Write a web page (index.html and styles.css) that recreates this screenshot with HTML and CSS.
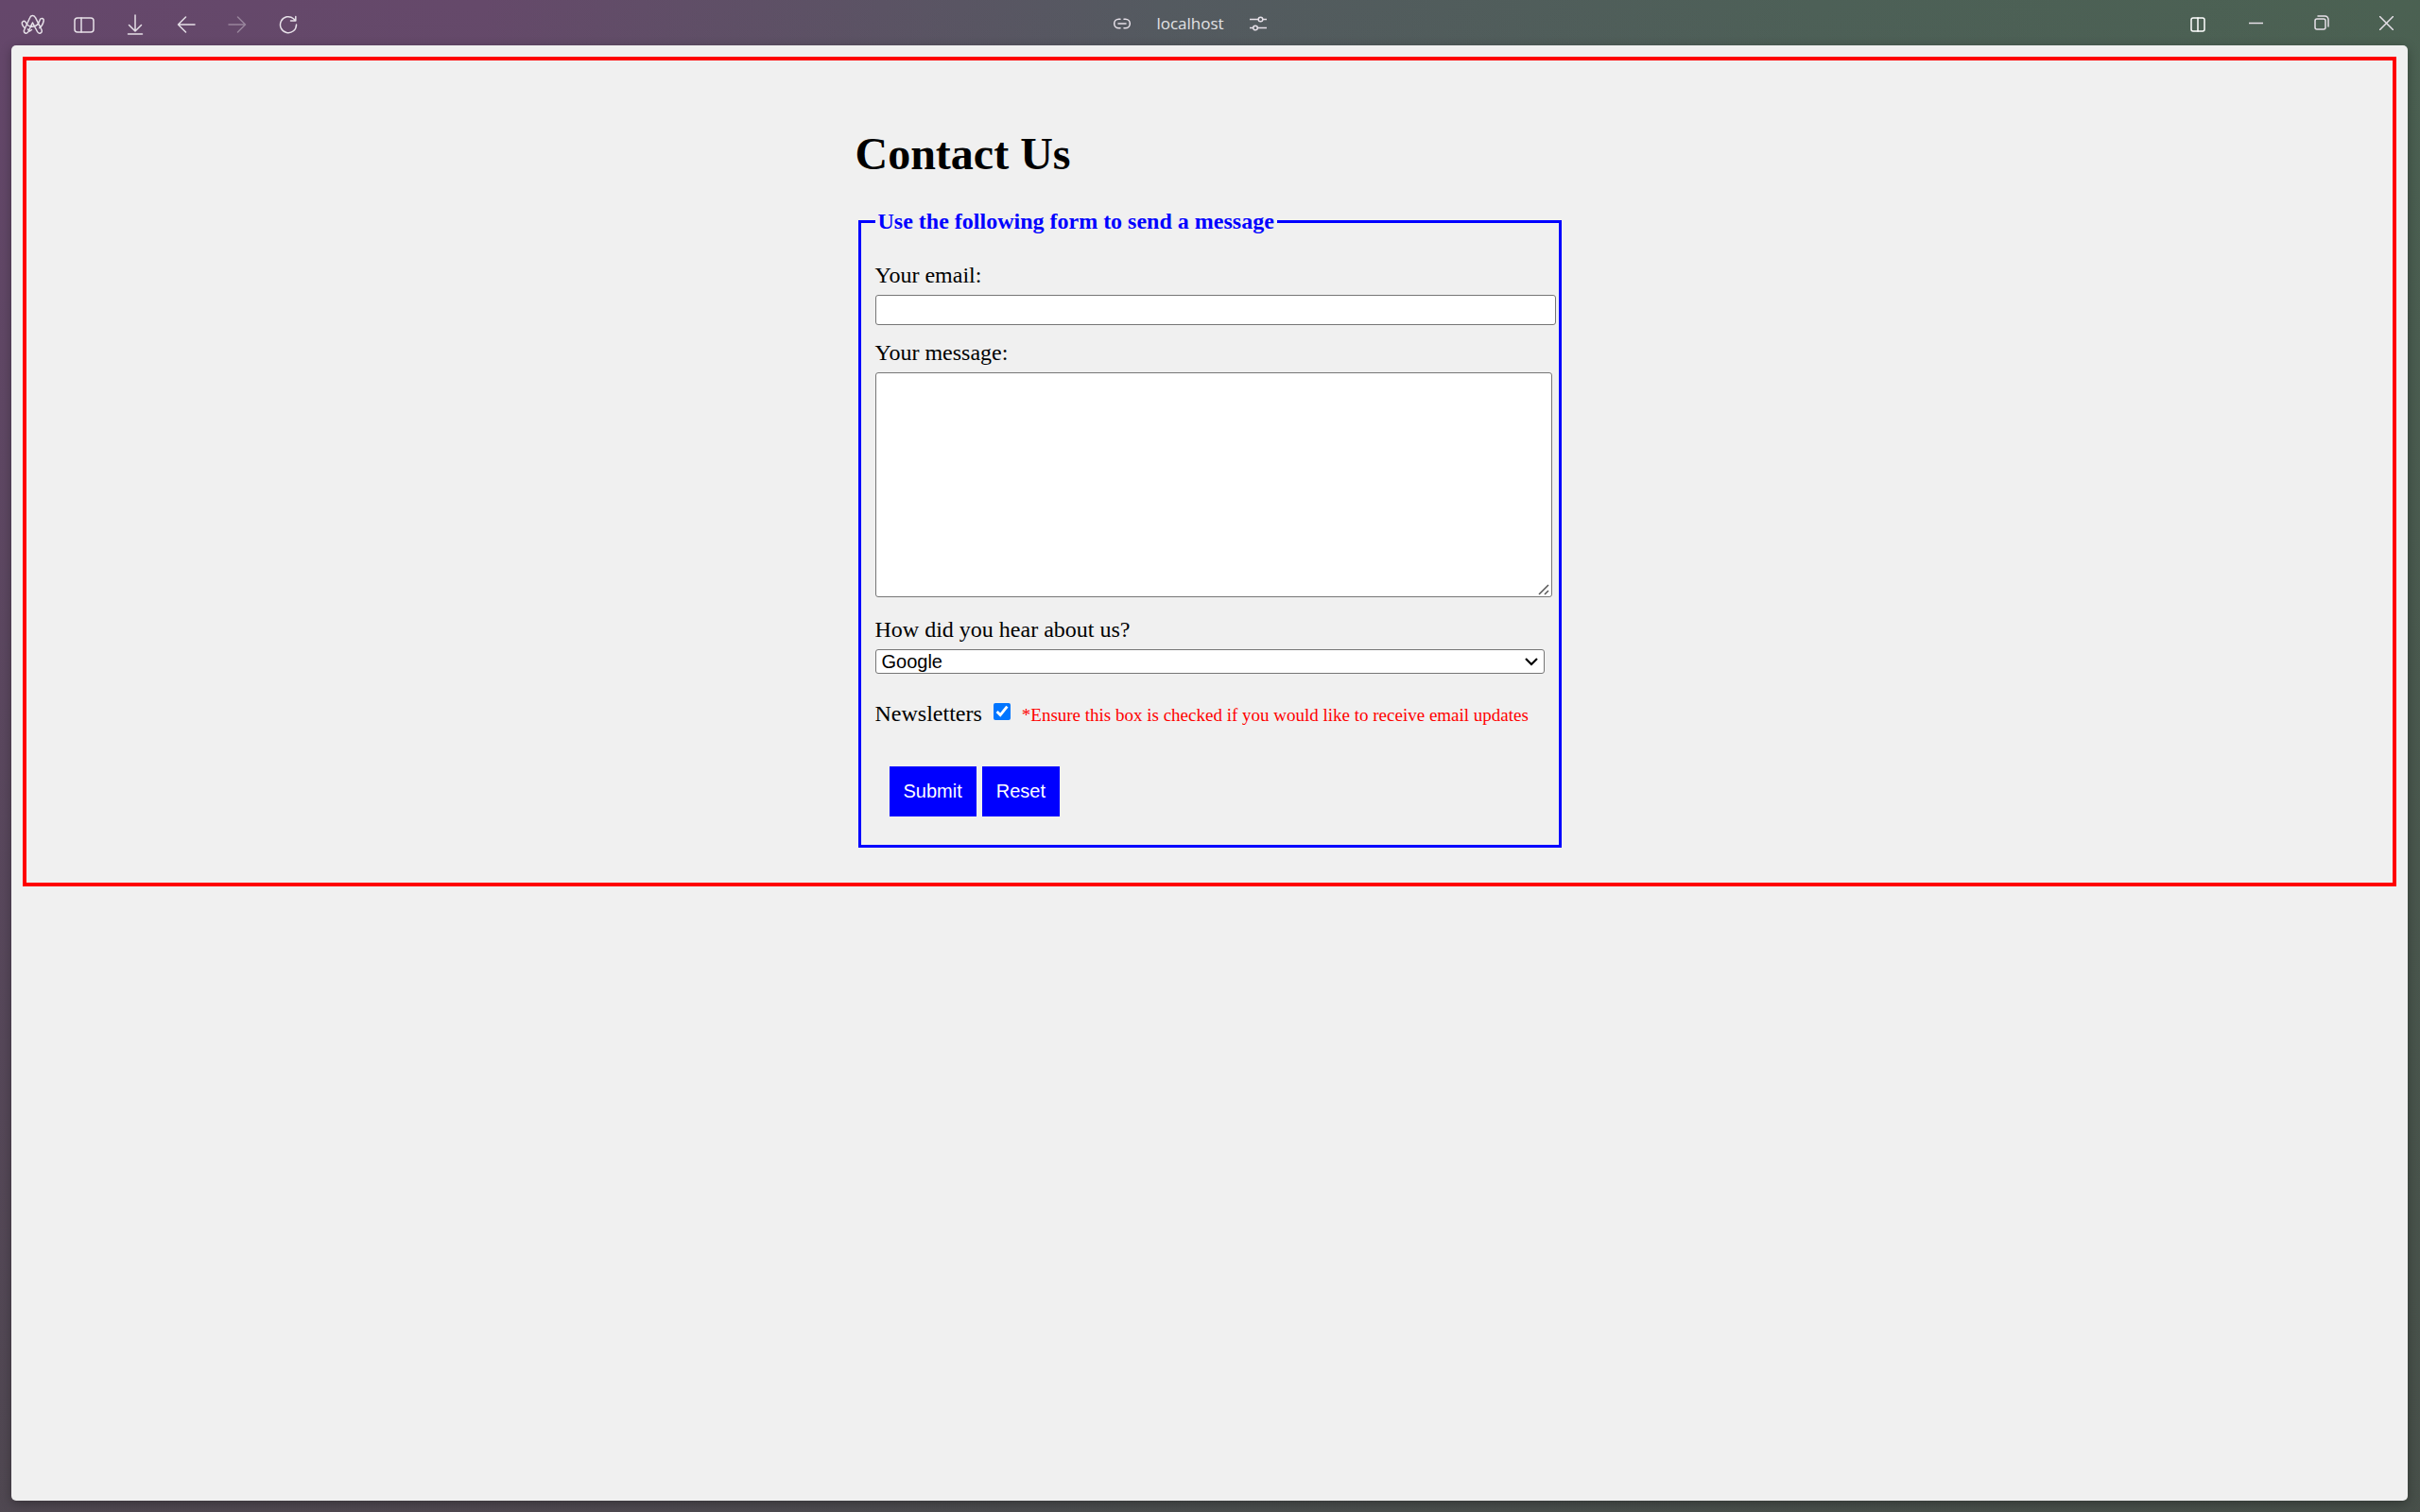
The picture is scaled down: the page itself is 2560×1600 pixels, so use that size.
FILE: index.html
```html
<!DOCTYPE html>
<html lang="en">
<head>
<meta charset="utf-8">
<title>Contact Us</title>
<link rel="stylesheet" href="styles.css">
</head>
<body>
<header class="toolbar">
  <nav class="tools" aria-label="Browser">
    <button class="tool" type="button" aria-label="Menu">
      <svg width="26" height="22" viewBox="0 0 26 22"><path d="M9.500 4C10.500 .8 14.300 .8 15.500 3.700L22 16.500C23.500 20 19 21.500 17.500 18.500L12.500 9L8 18.500C6.500 21.500 2.300 20 3.600 16.800Z M4.500 15C1 12 .8 9 1.800 8.200C3.500 6.500 5 7.500 5.700 9.500C8.500 14.500 17.500 15 20 6.500C20.500 3.800 24.800 4 24.200 7C23.500 10.500 22 13 19.800 14.500 M10 13.500L12.500 9L15 13.800 M7.500 16L9.500 18L11.500 16.500"/></svg>
    </button>
    <button class="tool" type="button" aria-label="Sidebar">
      <svg width="24" height="20" viewBox="0 0 24 20"><rect x="2" y="3" width="20" height="15" rx="3"/><path d="M9 3V18"/></svg>
    </button>
    <button class="tool" type="button" aria-label="Downloads">
      <svg width="20" height="22" viewBox="0 0 20 22"><path d="M10 1V18M3.500 11.500L10 18L16.500 11.500M2.500 21H17.500"/></svg>
    </button>
    <button class="tool" type="button" aria-label="Back">
      <svg width="20" height="20" viewBox="0 0 20 20"><path d="M19 10H1.500M9.500 2L1.500 10L9.500 18"/></svg>
    </button>
    <button class="tool faded" type="button" aria-label="Forward">
      <svg width="20" height="20" viewBox="0 0 20 20"><path d="M1 10H18.500M10.500 2L18.500 10L10.500 18"/></svg>
    </button>
    <button class="tool" type="button" aria-label="Reload">
      <svg width="20" height="20" viewBox="0 0 20 20"><path d="M18.500 10A8.500 8.500 0 1 1 15.500 3.700L17.500 5.800M17.800 1.500V6H12.500"/></svg>
    </button>
  </nav>
  <div class="address">
    <button class="site" type="button" aria-label="Copy link">
      <svg width="18" height="12" viewBox="0 0 18 12"><path d="M7 1.200H5.500A4.700 4.700 0 0 0 5.500 10.800H7M11 1.200H12.500A4.700 4.700 0 0 1 12.500 10.800H11M5 6H13"/></svg>
    </button>
    <span class="host">localhost</span>
    <button class="site" type="button" aria-label="Site controls">
      <svg width="18" height="16" viewBox="0 0 18 16"><path d="M0 3.500H9M14 3.500H18M0 12.500H3.500M8.500 12.500H18"/><circle cx="11.500" cy="3.500" r="2.300"/><circle cx="6" cy="12.500" r="2.300"/></svg>
    </button>
  </div>
  <div class="window-controls">
    <button class="tool" type="button" aria-label="Split view">
      <svg width="16" height="16" viewBox="0 0 16 16"><rect x="1" y="1" width="14" height="14" rx="2"/><path d="M8 1V15"/></svg>
    </button>
    <button class="control" type="button" aria-label="Minimize">
      <svg width="15" height="15" viewBox="0 0 15 15"><path d="M0 7.500H15"/></svg>
    </button>
    <button class="control" type="button" aria-label="Restore">
      <svg width="16" height="16" viewBox="0 0 16 16"><rect x="1" y="4" width="11" height="11" rx="2"/><path d="M4 1H11.500A3.500 3.500 0 0 1 15 4.500V12"/></svg>
    </button>
    <button class="control" type="button" aria-label="Close">
      <svg width="15" height="15" viewBox="0 0 15 15"><path d="M0 0L15 15M15 0L0 15"/></svg>
    </button>
  </div>
</header>
<main class="page">
  <section class="panel">
    <form class="contact">
      <h1 class="title">Contact Us</h1>
      <fieldset class="group">
        <legend class="legend">Use the following form to send a message</legend>
        <label class="label" for="email">Your email:</label>
        <input class="field email" id="email" type="email">
        <label class="label" for="message">Your message:</label>
        <textarea class="field message" id="message"></textarea>
        <label class="label" for="source">How did you hear about us?</label>
        <select class="field source" id="source">
          <option>Google</option>
          <option>Friend</option>
        </select>
        <div class="newsletter">
          <label for="news">Newsletters</label>
          <input class="check" id="news" type="checkbox" checked>
          <span class="note">*Ensure this box is checked if you would like to receive email updates</span>
        </div>
        <div class="actions">
          <button class="action" type="submit">Submit</button>
          <button class="action" type="reset">Reset</button>
        </div>
      </fieldset>
    </form>
  </section>
</main>
</body>
</html>
```
FILE: styles.css
```css
* {
  box-sizing: border-box;
}

body {
  margin: 0;
  min-height: 100vh;
  display: flex;
  flex-direction: column;
  font: 24px/28px "Liberation Serif", "Times New Roman", serif;
  color: #000;
  background:
    linear-gradient(to bottom, rgba(70, 72, 70, 0), rgba(70, 72, 70, 0.7)),
    linear-gradient(to right, #65476b, #65496a 20%, #545a60 48%, #4d6057 75%, #4b6152);
}

/* Browser toolbar */
.toolbar {
  display: grid;
  grid-template-columns: 1fr auto 1fr;
  height: 48px;
}

.tools,
.address,
.window-controls {
  display: flex;
  align-items: center;
}

.tools {
  padding: 4px 0 0 8px;
}

.window-controls {
  justify-content: flex-end;
  padding-right: 1px;
}

.tool,
.control,
.site {
  display: flex;
  align-items: center;
  justify-content: center;
  height: 44px;
  padding: 0;
  border: 0;
  background: none;
  color: #e6e0e8;
}

.tool {
  width: 54px;
}

.window-controls .tool {
  padding-top: 4px;
  color: #fff;
}

.control {
  width: 69px;
}

.faded {
  opacity: 0.4;
}

.toolbar svg {
  fill: none;
  stroke: currentColor;
  stroke-width: 1.5;
  stroke-linecap: round;
  stroke-linejoin: round;
}

.address {
  gap: 27px;
  padding: 2px 42px 0 0;
}

.host {
  font: 17px/24px "Open Sans", "Noto Sans", sans-serif;
  color: #e2e2e5;
}

/* Web page */
.page {
  flex: 1;
  margin: 0 13px 12px 12px;
  padding: 12px;
  border-radius: 5px;
  background: #f0f0f0;
  box-shadow: 0 3px 12px rgba(0, 0, 0, 0.3);
}

.panel {
  border: 4px solid #f00;
  padding: 71px 24px 37px;
}

.contact {
  width: 750px;
  max-width: 100%;
  margin: 0 auto;
}

.title {
  margin: 0 0 30px;
  font-size: 48px;
  line-height: 55px;
}

.group {
  display: flex;
  flex-direction: column;
  align-items: flex-start;
  margin: 0 3px;
  padding: 29px 3px 30px 15px;
  border: 3px solid #00f;
}

.legend {
  padding: 0 3px;
  font-weight: bold;
  color: #00f;
}

.label {
  margin-bottom: 7px;
}

.field {
  border: 1px solid #767676;
  border-radius: 3px;
  background: #fff;
  color: #000;
  font: 20px/24px "Liberation Sans", Arial, sans-serif;
}

.email {
  width: 100%;
  height: 32px;
  margin-bottom: 15px;
}

.message {
  width: 716px;
  max-width: 100%;
  height: 238px;
  margin-bottom: 20px;
  resize: both;
}

.message::-webkit-resizer {
  background: url("data:image/svg+xml,%3Csvg xmlns='http://www.w3.org/2000/svg' width='15' height='15'%3E%3Cpath d='M2 13L12 3M8 13L12 9' stroke='%23555' stroke-width='1.5'/%3E%3C/svg%3E") no-repeat;
}

.source {
  appearance: none;
  width: 708px;
  max-width: 100%;
  height: 26px;
  margin-bottom: 28px;
  padding: 0 24px 0 6px;
  background: #fff url("data:image/svg+xml,%3Csvg xmlns='http://www.w3.org/2000/svg' width='14' height='9'%3E%3Cpath d='M1 1L7 7L13 1' fill='none' stroke='black' stroke-width='2.2'/%3E%3C/svg%3E") no-repeat right 6px center;
}

.newsletter {
  display: flex;
  align-items: baseline;
}

.check {
  align-self: center;
  width: 18px;
  height: 18px;
  margin: 0 12px 4px;
  accent-color: #0075ff;
}

.note {
  font-size: 19px;
  line-height: 24px;
  color: #f00;
}

.actions {
  display: flex;
  gap: 6px;
  margin: 42px 15px 0;
}

.action {
  padding: 15px;
  border: 0;
  background: #00f;
  color: #fff;
  font: 20px/23px "Liberation Sans", Arial, sans-serif;
}
```
